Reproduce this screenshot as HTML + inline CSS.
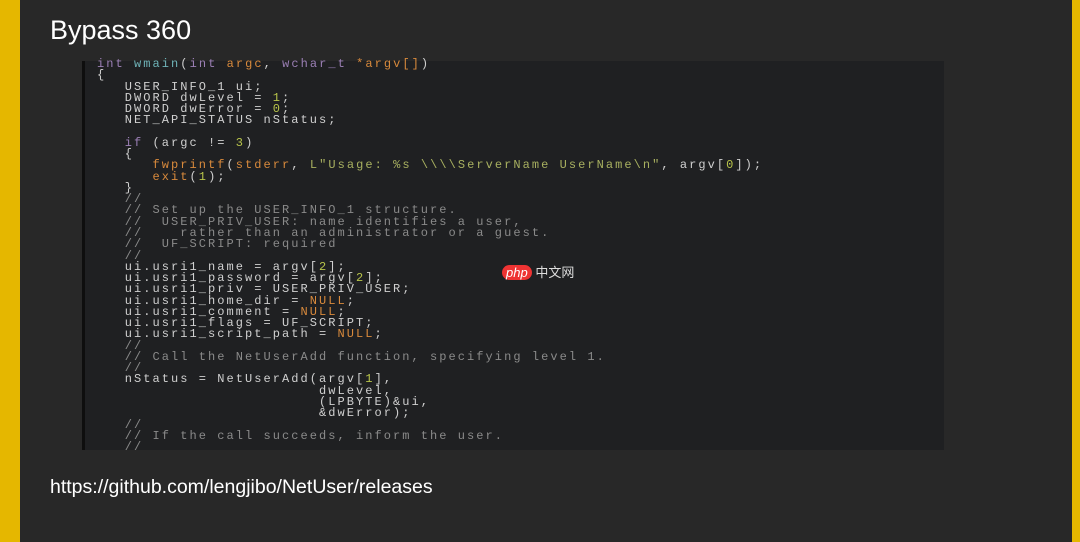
<!DOCTYPE html>
<html><head><meta charset="utf-8"><style>
body{margin:0;width:1080px;height:542px;background:#282828;position:relative;overflow:hidden;font-family:"Liberation Sans",sans-serif}
.yl{position:absolute;left:0;top:0;width:20px;height:542px;background:#e5b700}
.yr{position:absolute;left:1072px;top:0;width:8px;height:542px;background:#e5b700}
h1{position:absolute;left:50px;top:15px;margin:0;font-weight:normal;font-size:27px;color:#fff}
.panel{position:absolute;left:82px;top:61px;width:862px;height:389px;background:#1f2022;border-left:3px solid #0e0e0e;box-sizing:border-box}
pre{position:absolute;left:97px;top:59px;margin:0;font-family:"Liberation Mono",monospace;font-size:12px;line-height:11.27px;letter-spacing:2.05px;color:#d0d0d0}
.k{color:#9b7fb5}.f{color:#6fb3b8}.o{color:#d98a3c}.n{color:#b8c44a}.s{color:#a8b060}.c{color:#8a8a8a}
.url{position:absolute;left:50px;top:476px;font-size:19.5px;color:#fff}
.wm{position:absolute;left:502px;top:262px;font-size:13px;color:#eee}
.wm b{background:#e33;color:#fff;border-radius:9px;padding:0 4px;font-style:italic;font-weight:normal}
</style></head><body>
<div class="yl"></div><div class="yr"></div>
<h1>Bypass 360</h1>
<div class="panel"></div>
<pre><span class="k">int</span> <span class="f">wmain</span>(<span class="k">int</span> <span class="o">argc</span>, <span class="k">wchar_t</span> <span class="o">*argv[]</span>)
{
   USER_INFO_1 ui;
   DWORD dwLevel = <span class="n">1</span>;
   DWORD dwError = <span class="n">0</span>;
   NET_API_STATUS nStatus;

   <span class="k">if</span> (argc != <span class="n">3</span>)
   {
      <span class="o">fwprintf</span>(<span class="o">stderr</span>, <span class="s">L"Usage: %s \\\\ServerName UserName\n"</span>, argv[<span class="n">0</span>]);
      <span class="o">exit</span>(<span class="n">1</span>);
   }
   <span class="c">//</span>
   <span class="c">// Set up the USER_INFO_1 structure.</span>
   <span class="c">//  USER_PRIV_USER: name identifies a user,</span>
   <span class="c">//    rather than an administrator or a guest.</span>
   <span class="c">//  UF_SCRIPT: required</span>
   <span class="c">//</span>
   ui.usri1_name = argv[<span class="n">2</span>];
   ui.usri1_password = argv[<span class="n">2</span>];
   ui.usri1_priv = USER_PRIV_USER;
   ui.usri1_home_dir = <span class="o">NULL</span>;
   ui.usri1_comment = <span class="o">NULL</span>;
   ui.usri1_flags = UF_SCRIPT;
   ui.usri1_script_path = <span class="o">NULL</span>;
   <span class="c">//</span>
   <span class="c">// Call the NetUserAdd function, specifying level 1.</span>
   <span class="c">//</span>
   nStatus = NetUserAdd(argv[<span class="n">1</span>],
                        dwLevel,
                        (LPBYTE)&amp;ui,
                        &amp;dwError);
   <span class="c">//</span>
   <span class="c">// If the call succeeds, inform the user.</span>
   <span class="c">//</span></pre>
<div class="wm"><b>php</b> <span style="color:#ddd">中文网</span></div>
<div class="url">https://github.com/lengjibo/NetUser/releases</div>
</body></html>
